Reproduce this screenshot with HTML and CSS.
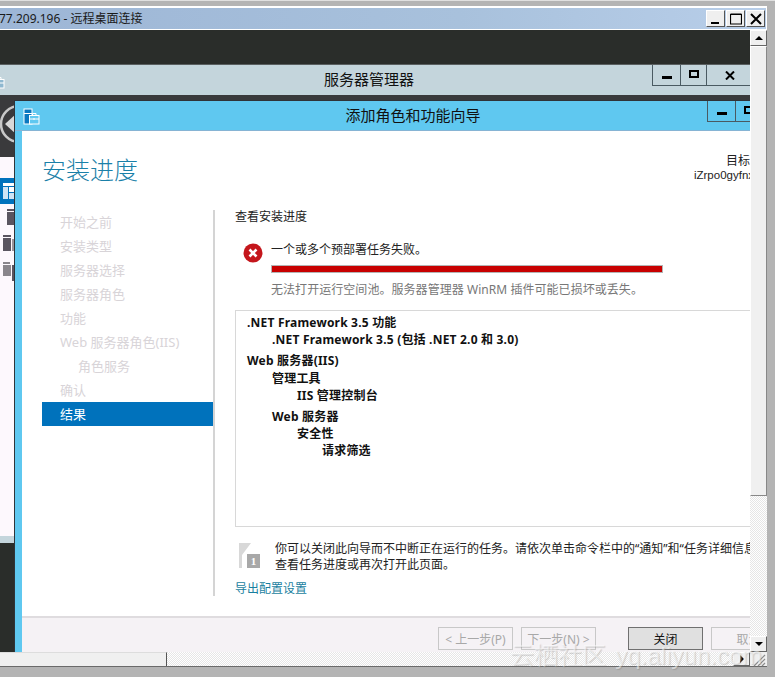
FILE: index.html
```html
<!DOCTYPE html>
<html lang="zh-CN">
<head>
    <meta charset="UTF-8">
    <title>远程桌面连接</title>
    <link rel="stylesheet" href="styles.css">
</head>
<body>
    <div class="frame">
        <div class="rdp-title">
            <span class="rdp-name">77.209.196 - 远程桌面连接</span>
            <div class="rdp-btns">
                <button class="rdp-btn"><svg width="12" height="12" viewBox="0 0 12 12"><rect x="1" y="9" width="8" height="2" fill="#000"/></svg></button>
                <button class="rdp-btn"><svg width="12" height="12" viewBox="0 0 12 12"><path d="M0.5 1.5h11v9.5h-11z M0.5 1h11" fill="none" stroke="#000" stroke-width="1.2"/></svg></button>
                <button class="rdp-btn"><svg width="12" height="12" viewBox="0 0 12 12"><path d="M1 1l10 10M11 1L1 11" stroke="#000" stroke-width="2"/></svg></button>
            </div>
        </div>

        <div class="client">
            <div class="view">
                <!-- server manager, behind the wizard -->
                <div class="win manager">
                    <div class="win-bar manager-bar">
                        <svg class="mgr-icon" width="17" height="17" viewBox="0 0 17 17">
                            <rect x="6.5" y="7.5" width="9.5" height="8.5" fill="#8fb8d0" stroke="#fff"/>
                            <path d="M9.5 7.5v-2h3.5v2M7 11h9M11 10v2" fill="none" stroke="#fff"/>
                        </svg>
                        <span class="win-title">服务器管理器</span>
                        <div class="win-ctrls">
                            <span class="ctrl ctrl-min"><i class="dash"></i></span>
                            <span class="ctrl ctrl-max"><i class="box"></i></span>
                            <span class="ctrl ctrl-close">
                                <svg width="10" height="9" viewBox="0 0 10 9"><path d="M1 0.5l8 8M9 0.5l-8 8" stroke="#000" stroke-width="2"/></svg>
                            </span>
                        </div>
                    </div>
                    <div class="manager-head">
                        <svg width="40" height="50" viewBox="0 0 40 50">
                            <circle cx="34" cy="25" r="18" fill="none" stroke="#c8c8c8" stroke-width="2.5"/>
                            <path d="M20 25l12-11v22z" fill="#d8d8d8"/>
                        </svg>
                    </div>
                    <div class="manager-side">
                        <div class="side-active">
                            <svg width="25" height="16" viewBox="0 0 25 16"><rect x="14" y="0" width="11" height="3" fill="#fff"/><rect x="14" y="4" width="5" height="12" fill="#cfe4f5"/><rect x="20" y="4" width="5" height="5" fill="#fff"/><rect x="20" y="10" width="5" height="6" fill="#cfe4f5"/></svg>
                        </div>
                        <svg class="side-icons" width="25" height="76" viewBox="0 0 25 76">
                            <rect x="18" y="0" width="7" height="2" fill="#5a5560"/>
                            <rect x="18" y="3" width="7" height="13" fill="#5a5560"/>
                            <rect x="14" y="26" width="8" height="2" fill="#5a5560"/>
                            <rect x="14" y="29" width="8" height="13" fill="#5a5560"/>
                            <rect x="23" y="30" width="2" height="12" fill="#9a959c"/>
                            <rect x="14" y="53" width="7" height="2" fill="#8a868c"/>
                            <rect x="14" y="56" width="8" height="11" fill="#8a868c"/>
                            <rect x="23" y="56" width="2" height="16" fill="#5a5560"/>
                        </svg>
                    </div>
                </div>

                <!-- add roles wizard -->
                <div class="win wizard">
                    <div class="win-bar wizard-bar">
                        <svg class="wiz-icon" width="17" height="17" viewBox="0 0 17 17">
                            <rect x="1" y="1" width="8" height="15" fill="#0a78c0" stroke="#fff"/>
                            <rect x="1" y="5" width="8" height="1" fill="#fff"/>
                            <rect x="6.5" y="7.5" width="9.5" height="8.5" fill="#5fc8f0" stroke="#fff"/>
                            <path d="M9.5 7.5v-2h3.5v2M7 11h9M11 10v2" fill="none" stroke="#fff"/>
                        </svg>
                        <span class="win-title">添加角色和功能向导</span>
                        <div class="win-ctrls">
                            <span class="ctrl ctrl-min"><i class="dash"></i></span>
                            <span class="ctrl ctrl-max"><i class="box"></i></span>
                            <span class="ctrl ctrl-close"></span>
                        </div>
                    </div>
                    <div class="wiz-body">
                        <div class="wiz-head">
                            <h1 class="wiz-heading">安装进度</h1>
                            <div class="target">
                                <div>目标服务器</div>
                                <div class="target-host">iZrpo0gyfnxZabcd</div>
                            </div>
                        </div>
                        <div class="wiz-main">
                            <ul class="steps">
                                <li>开始之前</li>
                                <li>安装类型</li>
                                <li>服务器选择</li>
                                <li>服务器角色</li>
                                <li>功能</li>
                                <li>Web 服务器角色(IIS)</li>
                                <li class="sub">角色服务</li>
                                <li>确认</li>
                                <li class="current">结果</li>
                            </ul>
                            <div class="pane">
                                <div class="pane-label">查看安装进度</div>
                                <div class="status">
                                    <svg class="err-icon" width="20" height="20" viewBox="0 0 20 20">
                                        <circle cx="10" cy="10" r="9.5" fill="#c4161c"/>
                                        <path d="M6.5 6.5l7 7M13.5 6.5l-7 7" stroke="#fff" stroke-width="2.6"/>
                                    </svg>
                                    <div class="status-text">
                                        <div>一个或多个预部署任务失败。</div>
                                        <div class="progress"></div>
                                        <div class="status-detail">无法打开运行空间池。服务器管理器 WinRM 插件可能已损坏或丢失。</div>
                                    </div>
                                </div>
                                <div class="results">
                                    <div class="r-row r1">.NET Framework 3.5 功能</div>
                                    <div class="r-row r2">.NET Framework 3.5 (包括 .NET 2.0 和 3.0)</div>
                                    <div class="r-row r1 gap">Web 服务器(IIS)</div>
                                    <div class="r-row r2">管理工具</div>
                                    <div class="r-row r3">IIS 管理控制台</div>
                                    <div class="r-row r2 gap">Web 服务器</div>
                                    <div class="r-row r3">安全性</div>
                                    <div class="r-row r4">请求筛选</div>
                                </div>
                                <div class="note">
                                    <div class="note-icon">
                                        <svg width="13" height="25" viewBox="0 0 13 25"><path d="M0 0h12L3 12v13H0z" fill="#d8d8d8"/></svg>
                                        <span class="note-num">1</span>
                                    </div>
                                    <div class="note-text">你可以关闭此向导而不中断正在运行的任务。请依次单击命令栏中的“通知”和“任务详细信息”，<br>查看任务进度或再次打开此页面。</div>
                                </div>
                                <a class="export">导出配置设置</a>
                            </div>
                        </div>
                        <div class="wiz-foot">
                            <button class="btn" disabled>&lt; 上一步(P)</button>
                            <button class="btn" disabled>下一步(N) &gt;</button>
                            <button class="btn btn-primary">关闭</button>
                            <button class="btn" disabled>取消</button>
                        </div>
                    </div>
                </div>
            </div>

            <div class="vscroll">
                <button class="sb-btn"><i class="tri tri-up"></i></button>
                <div class="sb-thumb"></div>
                <div class="sb-track"></div>
                <button class="sb-btn"><i class="tri tri-down"></i></button>
            </div>
        </div>

        <div class="hscroll">
            <div class="hs-thumb"></div>
            <div class="hs-track"></div>
            <button class="sb-btn hs-btn"><i class="tri tri-right"></i></button>
            <div class="grip">
                <svg width="17" height="15" viewBox="0 0 17 15"><path d="M4 14L15 3M8 14l7-7M12 14l3-3" stroke="#8a8a8a" stroke-width="1.2"/></svg>
            </div>
        </div>
    </div>
    <div class="watermark">云栖社区 <span class="wm-latin">yq.aliyun.com</span></div>
</body>
</html>
```

FILE: styles.css
```css
* {
    box-sizing: border-box;
}
body {
    margin: 0;
    font-family: "Noto Sans", "Noto Sans CJK SC", sans-serif;
    font-size: 12px;
    color: #222;
    overflow: hidden;
}
button {
    font-family: inherit;
    padding: 0;
}
.frame {
    width: 775px;
    height: 677px;
    background: #b4b4b4;
    border-top: 1px solid #e0e0e0;
    padding: 5px 8px 9px 0;
    display: flex;
    flex-direction: column;
}
.rdp-title {
    height: 24px;
    flex: none;
    border-top: 2px solid #fff;
    border-bottom: 1px solid #fff;
    border-right: 1px solid #fff;
    background: linear-gradient(to right, #9db6d6, #a8c1dc 60%, #b8cee9);
    display: flex;
    align-items: center;
    justify-content: space-between;
    padding-right: 1px;
}
.rdp-name {
    font-size: 12px;
    margin: -2px 0 0 -1px;
    color: #1a1a1a;
    white-space: nowrap;
}
.rdp-btns {
    display: flex;
    gap: 1px;
}
.rdp-btn {
    width: 19px;
    height: 17px;
    background: #efefef;
    border: 1px solid;
    border-color: #fff #555 #555 #fff;
    display: flex;
    align-items: center;
    justify-content: center;
}
.client {
    flex: none;
    display: flex;
    height: 622px;
}
.view {
    position: relative;
    width: 750px;
    height: 622px;
    overflow: hidden;
    background: #2a2d2a;
}
.win {
    position: absolute;
}
.win-bar {
    display: grid;
    grid-template-columns: 1fr auto 1fr;
    align-items: start;
}
.win-title {
    font-size: 15px;
    line-height: 28px;
    color: #111;
    white-space: nowrap;
}
.win-ctrls {
    justify-self: end;
    display: flex;
    height: 21px;
}
.ctrl {
    border-left: 1px solid #4a5a62;
    border-bottom: 1px solid #4a5a62;
    display: flex;
    align-items: center;
    justify-content: center;
}
.ctrl-min {
    width: 28px;
}
.ctrl-max {
    width: 26px;
}
.ctrl-close {
    width: 50px;
    padding-right: 4px;
}
.dash {
    width: 10px;
    height: 3px;
    background: #000;
    margin-top: 5px;
}
.box {
    width: 10px;
    height: 8px;
    border: 2px solid #000;
    margin-top: -3px;
}
.manager {
    left: -18px;
    top: 34px;
    width: 774px;
    height: 479px;
    background: #c4d5dc;
    border-top: 1px solid #5a5f60;
    padding-bottom: 7px;
    display: flex;
    flex-direction: column;
}
.manager-bar {
    height: 30px;
    flex: none;
}
.mgr-icon {
    display: block;
    margin: 7px 0 0 6px;
}
.manager-head {
    height: 62px;
    flex: none;
    background: #3a3a3c;
    padding-top: 4px;
    margin-left: 7px;
    overflow: hidden;
}
.manager-head svg {
    display: block;
    margin-left: -4px;
}
.manager-side {
    flex: 1;
    margin-left: 7px;
    background: #fdf8fd;
    padding-top: 21px;
}
.side-active {
    height: 26px;
    background: #0072bc;
    padding: 5px 0 0 0;
}
.side-active svg,
.side-icons {
    display: block;
}
.side-icons {
    margin-top: 5px;
}
.wizard {
    left: 14px;
    top: 70px;
    width: 797px;
    height: 552px;
    background: #5fc8f0;
    border-left: 1px solid #2f3438;
    border-top: 1px solid #2f3438;
    display: flex;
    flex-direction: column;
}
.wizard-bar {
    height: 30px;
    flex: none;
    border-bottom: 1px solid #86b4d4;
}
.wiz-icon {
    margin: 7px 0 0 8px;
    display: block;
}
.wiz-body {
    flex: 1;
    margin-left: 7px;
    background: #fff;
    display: flex;
    flex-direction: column;
    min-height: 0;
}
.wiz-head {
    height: 79px;
    flex: none;
    display: flex;
    justify-content: space-between;
    padding: 20px 25px 0 20px;
}
.wiz-heading {
    margin: 0;
    font-size: 24px;
    font-weight: 300;
    line-height: 38px;
    color: #1a80a8;
}
.target {
    text-align: right;
    font-size: 12px;
    line-height: 14px;
    padding-top: 3px;
    color: #222;
}
.target-host {
    font-family: "Liberation Sans", sans-serif;
    font-size: 11.5px;
}
.wiz-main {
    flex: 1;
    display: flex;
    min-height: 0;
}
.steps {
    list-style: none;
    margin: 0;
    padding: 0;
    width: 193px;
    height: 386px;
    border-right: 2px solid #d4d4d4;
    flex: none;
}
.steps li {
    height: 24px;
    line-height: 24px;
    margin-left: 20px;
    padding-left: 18px;
    font-size: 13px;
    color: #d8d4d8;
    white-space: nowrap;
}
.steps li.sub {
    padding-left: 36px;
}
.steps li.current {
    background: #0072bc;
    color: #fff;
}
.pane {
    flex: 1;
    padding: 0 25px 0 20px;
    min-width: 0;
}
.pane-label {
    height: 14px;
    line-height: 14px;
    margin-bottom: 19px;
}
.status {
    display: flex;
    height: 67px;
    padding-left: 8px;
    gap: 8px;
}
.err-icon {
    flex: none;
}
.status-text {
    flex: 1;
    line-height: 14px;
}
.progress {
    width: 392px;
    height: 8px;
    background: #c80000;
    border: 1px solid #b4b4b4;
    margin: 8px 0 10px;
}
.status-detail {
    color: #777;
    white-space: nowrap;
    letter-spacing: 0.05px;
}
.results {
    height: 217px;
    border: 1px solid #d8d8d8;
    padding: 3px 0 0 11px;
    font-weight: 700;
    color: #111;
    letter-spacing: 0.2px;
}
.r-row {
    line-height: 17.2px;
    white-space: nowrap;
}
.r2 {
    padding-left: 25px;
}
.r3 {
    padding-left: 50px;
}
.r4 {
    padding-left: 75px;
}
.gap {
    margin-top: 4px;
}
.note {
    display: flex;
    padding: 14px 0 0 4px;
    height: 50px;
}
.note-icon {
    width: 36px;
    flex: none;
    position: relative;
    padding-top: 2px;
}
.note-icon svg {
    display: block;
}
.note-num {
    position: absolute;
    left: 8px;
    top: 13px;
    width: 13px;
    height: 14px;
    background: #a8a8a8;
    color: #fff;
    font: 700 11px/14px "Liberation Serif", serif;
    text-align: center;
}
.note-text {
    line-height: 16px;
    white-space: nowrap;
}
.export {
    display: block;
    margin-top: 5px;
    line-height: 14px;
    color: #1a7fa0;
}
.wiz-foot {
    height: 36px;
    flex: none;
    background: #f5f2f5;
    border-top: 2px solid #dfdcdf;
    display: flex;
    justify-content: flex-end;
    gap: 8px;
    padding: 9px 25px 0 0;
}
.btn {
    width: 75px;
    height: 23px;
    font-size: 12px;
    background: #f5f2f5;
    color: #a8a8a8;
    border: 1px solid #c8c8c8;
}
.btn-primary {
    background: #e0e0e0;
    border-color: #707070;
    color: #111;
    margin-left: 24px;
}
.vscroll {
    width: 17px;
    flex: none;
    display: flex;
    flex-direction: column;
}
.sb-btn {
    width: 17px;
    height: 16px;
    flex: none;
    background: #efefef;
    border: 1px solid;
    border-color: #fff #666 #666 #fff;
    display: flex;
    align-items: center;
    justify-content: center;
}
.sb-thumb {
    height: 450px;
    flex: none;
    background: #f0f0f0;
    border: 1px solid;
    border-color: #fff #888 #888 #fff;
}
.sb-track,
.hs-track {
    flex: 1;
    background: repeating-conic-gradient(#fff 0 25%, #e6e6e6 0 50%) 0 0 / 2px 2px;
}
.tri {
    width: 0;
    height: 0;
    display: block;
    border: 4px solid transparent;
}
.tri-up {
    border-top: 0;
    border-bottom-color: #000;
}
.tri-down {
    border-bottom: 0;
    border-top-color: #000;
}
.tri-right {
    border-right: 0;
    border-left-color: #000;
}
.hscroll {
    height: 15px;
    flex: none;
    display: flex;
    border-bottom: 1px solid #6a6a6a;
}
.hs-thumb {
    width: 167px;
    flex: none;
    background: #f0f0f0;
    border-top: 1px solid #ddd;
    border-right: 1px solid #555;
}
.hs-btn {
    height: 14px;
}
.grip {
    width: 17px;
    flex: none;
    background: #efefef;
}
.grip svg {
    display: block;
}
.watermark {
    position: absolute;
    left: 510px;
    top: 638px;
    font-size: 24px;
    line-height: 34px;
    color: rgba(255, 255, 255, 0.5);
    text-shadow: 1px 1px 1px rgba(120, 120, 120, 0.3);
    white-space: nowrap;
}
.wm-latin {
    font-family: "Liberation Sans", sans-serif;
    font-size: 24px;
    margin-left: 3px;
}
```
